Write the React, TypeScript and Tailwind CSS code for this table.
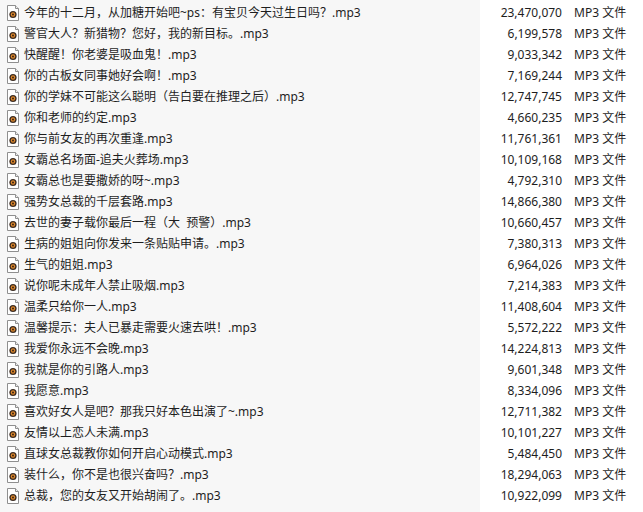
const files = [
  ["今年的十二月，从加糖开始吧~ps：有宝贝今天过生日吗？.mp3", "23,470,070"],
  ["警官大人？新猎物？您好，我的新目标。.mp3", "6,199,578"],
  ["快醒醒！你老婆是吸血鬼！.mp3", "9,033,342"],
  ["你的古板女同事她好会啊！.mp3", "7,169,244"],
  ["你的学妹不可能这么聪明（告白要在推理之后）.mp3", "12,747,745"],
  ["你和老师的约定.mp3", "4,660,235"],
  ["你与前女友的再次重逢.mp3", "11,761,361"],
  ["女霸总名场面-追夫火葬场.mp3", "10,109,168"],
  ["女霸总也是要撒娇的呀~.mp3", "4,792,310"],
  ["强势女总裁的千层套路.mp3", "14,866,380"],
  ["去世的妻子载你最后一程（大  预警）.mp3", "10,660,457"],
  ["生病的姐姐向你发来一条贴贴申请。.mp3", "7,380,313"],
  ["生气的姐姐.mp3", "6,964,026"],
  ["说你呢未成年人禁止吸烟.mp3", "7,214,383"],
  ["温柔只给你一人.mp3", "11,408,604"],
  ["温馨提示：夫人已暴走需要火速去哄！.mp3", "5,572,222"],
  ["我爱你永远不会晚.mp3", "14,224,813"],
  ["我就是你的引路人.mp3", "9,601,348"],
  ["我愿意.mp3", "8,334,096"],
  ["喜欢好女人是吧？那我只好本色出演了~.mp3", "12,711,382"],
  ["友情以上恋人未满.mp3", "10,101,227"],
  ["直球女总裁教你如何开启心动模式.mp3", "5,484,450"],
  ["装什么，你不是也很兴奋吗？.mp3", "18,294,063"],
  ["总裁，您的女友又开始胡闹了。.mp3", "10,922,099"],
]

function Mp3Icon() {
  return (
    <svg width="16" height="16" viewBox="0 0 16 16" className="shrink-0">
      <path d="M2.5 0.5h8l3 3v12h-11z" fill="#fff" stroke="#8f8f8f" />
      <path d="M10.5 0.5v3h3" fill="#eee" stroke="#8f8f8f" />
      <circle cx="8" cy="9.5" r="3.6" fill="#3a2a20" />
      <circle cx="8" cy="9.5" r="2.2" fill="#e0892c" />
      <circle cx="8" cy="9.5" r="0.9" fill="#2a1a10" />
    </svg>
  )
}

export default function App() {
  return (
    <div
      className="h-[512px] w-[643px] overflow-hidden bg-[linear-gradient(to_right,#f7f7f7_480px,#ffffff_480px)] pt-[2px] text-[12px] text-[#1e1e1e]"
      style={{ fontFamily: '"Noto Sans", "Noto Sans CJK SC", sans-serif' }}
    >
      {files.map(([name, size]) => (
        <div key={name} className="flex h-[21px] items-center">
          <div className="flex w-[480px] items-center gap-[3px] pl-[5px]">
            <Mp3Icon />
            <span className="whitespace-pre">{name}</span>
          </div>
          <div className="w-[82px] text-right">{size}</div>
          <div className="pl-[12px]">MP3 文件</div>
        </div>
      ))}
    </div>
  )
}
